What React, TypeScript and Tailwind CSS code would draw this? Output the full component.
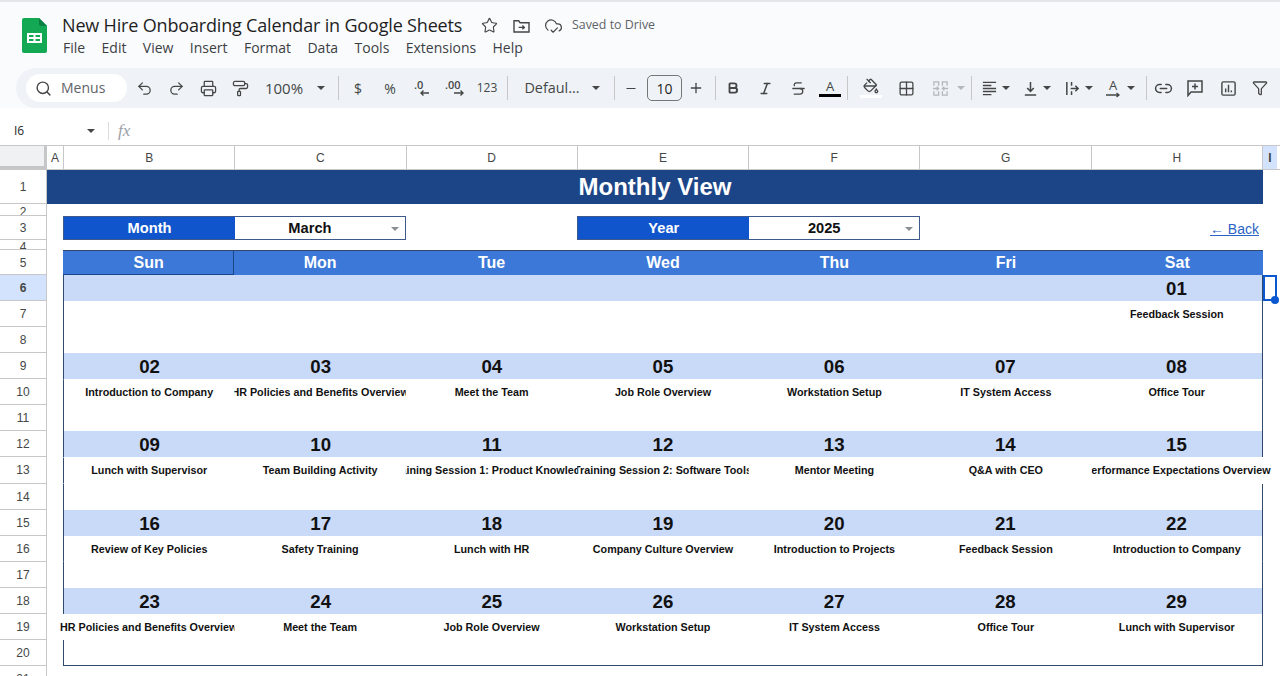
import type { ReactNode } from 'react';
import {
  Bold,
  CloudCheck,
  Funnel,
  Grid2x2,
  Italic,
  Link2,
  Minus,
  PaintBucket,
  PaintRoller,
  Plus,
  Printer,
  Redo2,
  Search,
  Star,
  Strikethrough,
  Undo2,
} from 'lucide-react';

const UI_FONT = 'font-["Open_Sans",sans-serif]';
const CELL_FONT = 'font-["Liberation_Sans",Arial,sans-serif]';
const ICON = 'w-[17px] h-[17px] text-[#444746]';

const weeks: { days: string[]; events: string[] }[] = [
  { days: ['', '', '', '', '', '', '01'], events: ['', '', '', '', '', '', 'Feedback Session'] },
  {
    days: ['02', '03', '04', '05', '06', '07', '08'],
    events: [
      'Introduction to Company',
      'HR Policies and Benefits Overview',
      'Meet the Team',
      'Job Role Overview',
      'Workstation Setup',
      'IT System Access',
      'Office Tour',
    ],
  },
  {
    days: ['09', '10', '11', '12', '13', '14', '15'],
    events: [
      'Lunch with Supervisor',
      'Team Building Activity',
      'Training Session 1: Product Knowledge',
      'Training Session 2: Software Tools',
      'Mentor Meeting',
      'Q&A with CEO',
      'Performance Expectations Overview',
    ],
  },
  {
    days: ['16', '17', '18', '19', '20', '21', '22'],
    events: [
      'Review of Key Policies',
      'Safety Training',
      'Lunch with HR',
      'Company Culture Overview',
      'Introduction to Projects',
      'Feedback Session',
      'Introduction to Company',
    ],
  },
  {
    days: ['23', '24', '25', '26', '27', '28', '29'],
    events: [
      'HR Policies and Benefits Overview',
      'Meet the Team',
      'Job Role Overview',
      'Workstation Setup',
      'IT System Access',
      'Office Tour',
      'Lunch with Supervisor',
    ],
  },
];

const dayNames = ['Sun', 'Mon', 'Tue', 'Wed', 'Thu', 'Fri', 'Sat'];
const colLetters = ['B', 'C', 'D', 'E', 'F', 'G', 'H'];

function Caret({ color = 'border-t-[#444746]' }: { color?: string }) {
  return (
    <span className={`block w-0 h-0 border-x-[4px] border-x-transparent border-t-[4px] ${color}`} />
  );
}

function Slot({ className, children }: { className: string; children?: ReactNode }) {
  return <div className={`flex items-center justify-center shrink-0 h-full ${className}`}>{children}</div>;
}

function Divider({ className }: { className: string }) {
  return (
    <Slot className={className}>
      <span className="block w-px h-[24px] bg-[#c7c7c7]" />
    </Slot>
  );
}

function SheetsLogo() {
  return (
    <svg viewBox="0 0 25 35" className="w-[25px] h-[35px] shrink-0">
      <path d="M2 0h15l8 8v25a2 2 0 0 1-2 2H2a2 2 0 0 1-2-2V2a2 2 0 0 1 2-2z" fill="#12a854" />
      <path d="M17 0l8 8h-6a2 2 0 0 1-2-2z" fill="#0b8043" />
      <path d="M5 15h15v10H5z M7 17v2h4.5v-2z M13.5 17v2H18v-2z M7 21v2h4.5v-2z M13.5 21v2H18v-2z" fill="#fff" fillRule="evenodd" />
    </svg>
  );
}

function Header() {
  const menus = ['File', 'Edit', 'View', 'Insert', 'Format', 'Data', 'Tools', 'Extensions', 'Help'];
  return (
    <div className="flex h-[66px] pl-[22px] pt-[16px] bg-[#f9fbfd]">
      <SheetsLogo />
      <div className={`ml-[15px] ${UI_FONT}`}>
        <div className="flex items-center h-[20px] mt-[-3px]">
          <span className="text-[18px] leading-[20px] text-[#1f1f1f] w-[400px] whitespace-nowrap tracking-[-0.17px]">
            New Hire Onboarding Calendar in Google Sheets
          </span>
          <Star className="ml-[19px] w-[17px] h-[17px] text-[#444746]" strokeWidth={1.6} />
          <svg viewBox="0 0 18 16" className="ml-[15px] w-[17px] h-[15px] text-[#444746]" fill="none" stroke="currentColor" strokeWidth="1.5">
            <path d="M1 3h5l1.5 2H17v10H1z" />
            <path d="M6 10h6M10 8l2 2-2 2" />
          </svg>
          <CloudCheck className="ml-[14px] w-[19px] h-[19px] text-[#444746]" strokeWidth={1.5} />
          <span className="ml-[9px] text-[12.4px] text-[#5f6368]">Saved to Drive</span>
        </div>
        <div className="flex gap-[16.4px] mt-[4px] ml-[1px] text-[14px] leading-[18px] text-[#3c4043]">
          {menus.map((m) => (
            <span key={m}>{m}</span>
          ))}
        </div>
      </div>
    </div>
  );
}

function Toolbar() {
  return (
    <div className={`ml-[16px] h-[40px] pl-[10px] flex items-center rounded-l-[20px] bg-[#eff3f8] text-[#444746] ${UI_FONT}`}>
      <div className="flex items-center w-[101px] h-[28px] pl-[9px] rounded-full bg-white shrink-0">
        <Search className="w-[17px] h-[17px] text-[#444746]" strokeWidth={2} />
        <span className="ml-[9px] mt-[-2px] text-[14px] text-[#5f6368]">Menus</span>
      </div>
      <Slot className="w-[32px] ml-[1px]"><Undo2 className={ICON} strokeWidth={1.8} /></Slot>
      <Slot className="w-[32px]"><Redo2 className={ICON} strokeWidth={1.8} /></Slot>
      <Slot className="w-[32px]"><Printer className={ICON} strokeWidth={1.8} /></Slot>
      <Slot className="w-[32px]"><PaintRoller className={ICON} strokeWidth={1.8} /></Slot>
      <Slot className="w-[56px] text-[15px]">100%</Slot>
      <Slot className="w-[18px]"><Caret /></Slot>
      <Divider className="w-[16px]" />
      <Slot className="w-[24px] text-[14px]">$</Slot>
      <Slot className="w-[40px] text-[14px]">%</Slot>
      <Slot className="w-[24px]">
        <svg viewBox="0 0 20 20" className="w-[20px] h-[20px]" fill="none" stroke="currentColor" strokeWidth="1.4">
          <text x="2" y="11" fontSize="11" fill="currentColor" stroke="none" fontWeight="600">.0</text>
          <path d="M17 15H9M11.5 12.5L9 15l2.5 2.5" />
        </svg>
      </Slot>
      <Slot className="w-[42px]">
        <svg viewBox="0 0 22 20" className="w-[22px] h-[20px]" fill="none" stroke="currentColor" strokeWidth="1.4">
          <text x="1" y="11" fontSize="11" fill="currentColor" stroke="none" fontWeight="600">.00</text>
          <path d="M10 15h9M16.5 12.5L19 15l-2.5 2.5" />
        </svg>
      </Slot>
      <Slot className="w-[22px] text-[12px]">123</Slot>
      <Divider className="w-[18px]" />
      <Slot className="w-[72px] text-[14.4px]">Defaul...</Slot>
      <Slot className="w-[16px]"><Caret /></Slot>
      <Divider className="w-[20px]" />
      <Slot className="w-[14px]"><Minus className="w-[15px] h-[15px]" strokeWidth={2} /></Slot>
      <Slot className="w-[35px] ml-[9px]">
        <div className="flex items-center justify-center w-full h-[26px] rounded-[5px] border border-[#747775] text-[14px] text-[#1f1f1f]">10</div>
      </Slot>
      <Slot className="w-[28px]"><Plus className="w-[16px] h-[16px]" strokeWidth={2} /></Slot>
      <Divider className="w-[10px]" />
      <Slot className="w-[26px]"><Bold className="w-[14px] h-[14px]" strokeWidth={3.2} /></Slot>
      <Slot className="w-[38px]"><Italic className="w-[15px] h-[15px]" strokeWidth={2.4} /></Slot>
      <Slot className="w-[29px]"><Strikethrough className={ICON} strokeWidth={1.8} /></Slot>
      <Slot className="w-[34px]">
        <div className="flex flex-col items-center">
          <span className="text-[13px] leading-[14px] text-[#444746]">A</span>
          <span className="block w-[22px] h-[3px] mt-[1px] bg-black" />
        </div>
      </Slot>
      <Divider className="w-px" />
      <Slot className="w-[36px] ml-[5px]">
        <div className="flex flex-col items-center">
          <PaintBucket className="w-[16px] h-[16px]" strokeWidth={2} />
          <span className="block w-[22px] h-[3px] mt-[1px] bg-white" />
        </div>
      </Slot>
      <Slot className="w-[34px]"><Grid2x2 className={ICON} strokeWidth={1.8} /></Slot>
      <Slot className="w-[34px]">
        <svg viewBox="0 0 18 18" className="w-[17px] h-[17px] text-[#b4b8bc]" fill="none" stroke="currentColor" strokeWidth="1.4">
          <path d="M2 6V2h5v4M11 6V2h5v4M2 12v4h5v-4M11 12v4h5v-4M1 9h5M12 9h5M5 7l2 2-2 2M13 7l-2 2 2 2" />
        </svg>
      </Slot>
      <Slot className="w-[8px]"><Caret color="border-t-[#b4b8bc]" /></Slot>
      <Divider className="w-[12px]" />
      <Slot className="w-[24px]">
        <svg viewBox="0 0 18 18" className="w-[17px] h-[17px]" fill="none" stroke="currentColor" strokeWidth="1.4">
          <path d="M2 2.5h14M2 5.8h9M2 9h14M2 12.2h14M2 15.5h9" />
        </svg>
      </Slot>
      <Slot className="w-[10px]"><Caret /></Slot>
      <Slot className="w-[24px] ml-[7px]">
        <svg viewBox="0 0 18 18" className="w-[17px] h-[17px]" fill="none" stroke="currentColor" strokeWidth="1.6">
          <path d="M3 16h12M9 2v10M5.5 8.5L9 12l3.5-3.5" />
        </svg>
      </Slot>
      <Slot className="w-[10px]"><Caret /></Slot>
      <Slot className="w-[24px] ml-[8px]">
        <svg viewBox="0 0 18 18" className="w-[17px] h-[17px]" fill="none" stroke="currentColor" strokeWidth="1.6">
          <path d="M3 2v14M8 2v4M8 12v4M7 9h8M12 6l3 3-3 3" />
        </svg>
      </Slot>
      <Slot className="w-[10px]"><Caret /></Slot>
      <Slot className="w-[24px] ml-[7px]">
        <div className="flex flex-col items-center">
          <span className="text-[13px] leading-[14px]">A</span>
          <svg viewBox="0 0 16 6" className="w-[16px] h-[6px]" fill="none" stroke="currentColor" strokeWidth="1.3">
            <path d="M1 3h13M11.5 1L14 3l-2.5 2" />
          </svg>
        </div>
      </Slot>
      <Slot className="w-[12px]"><Caret /></Slot>
      <Divider className="w-[18px]" />
      <Slot className="w-[16px]"><Link2 className="w-[19px] h-[19px] shrink-0" strokeWidth={1.9} /></Slot>
      <Slot className="w-[48px]">
        <svg viewBox="0 0 18 18" className="w-[18px] h-[18px]" fill="none" stroke="currentColor" strokeWidth="1.5">
          <path d="M2 2h14v11H5l-3 3.5zM9 4.5v6M6 7.5h6" />
        </svg>
      </Slot>
      <Slot className="w-[18px]">
        <svg viewBox="0 0 18 18" className="w-[17px] h-[17px]" fill="none" stroke="currentColor" strokeWidth="1.5">
          <rect x="2" y="2" width="14" height="14" rx="1.5" />
          <path d="M6 13V9M9 13V5M12 13v-2" />
        </svg>
      </Slot>
      <Slot className="w-[46px]"><Funnel className="w-[16px] h-[16px]" strokeWidth={1.9} /></Slot>
    </div>
  );
}

function FormulaBar() {
  return (
    <div className={`flex items-center h-[30px] mt-[8px] bg-white border-b border-[#c7c7c7] text-[#444746] ${UI_FONT}`}>
      <span className="w-[87px] pl-[14px] text-[12px] text-[#1f1f1f]">I6</span>
      <Caret />
      <span className="block w-px h-[18px] ml-[13px] bg-[#dadce0]" />
      <span className="ml-[9px] text-[17px] italic font-['Liberation_Serif',serif] text-[#9aa0a6]">fx</span>
    </div>
  );
}

function ColumnHeaders() {
  return (
    <div className={`flex h-[24px] border-b border-[#c7c7c7] text-[12px] text-[#444746] ${CELL_FONT}`}>
      <div className="w-[47px] h-full bg-[#f0f1f2] border-r-[3px] border-b-[3px] border-[#c4c7c5] shrink-0" />
      <div className="flex items-center justify-center w-[17px] h-full border-r border-[#c7c7c7] shrink-0">A</div>
      {colLetters.map((c) => (
        <div key={c} className="flex items-center justify-center flex-1 h-full border-r border-[#c7c7c7]">
          {c}
        </div>
      ))}
      <div className="flex items-center justify-center w-[14px] h-full bg-[#d3e3fd] font-bold shrink-0">I</div>
      <div className="w-[3px] shrink-0" />
    </div>
  );
}

// one sheet row: number gutter, then the cells from column A on
function Row({ n, h, active, small, children }: { n: string; h: string; active?: boolean; small?: boolean; children?: ReactNode }) {
  return (
    <div className={`flex ${h}`}>
      <div
        className={`flex items-center justify-center w-[47px] shrink-0 border-r border-b border-[#c7c7c7] text-[12px] overflow-hidden text-[#444746] ${CELL_FONT} ${
          small ? 'pt-[4px]' : 'pt-[1px]'
        } ${active ? 'bg-[#d3e3fd] font-bold' : 'bg-white'}`}
      >
        {n}
      </div>
      {children}
    </div>
  );
}

function Spacer() {
  return <div className="w-[16px] shrink-0" />;
}

function WeekNumbers({ n, days, active }: { n: string; days: string[]; active?: boolean }) {
  return (
    <Row n={n} h="h-[26.07px]" active={active}>
      <Spacer />
      <div className="grid grid-cols-7 w-[1200px] border-x border-[#2f4a6d] bg-[#c9daf8]">
        {days.map((d, i) => (
          <div key={i} className="flex items-center justify-center text-[18.67px] font-bold text-[#111]">
            {d}
          </div>
        ))}
      </div>
      {active && (
        <div className="relative w-[14px] h-full border-2 border-[#0b57d0] shrink-0">
          <span className="absolute right-[-4px] bottom-[-5px] w-[8px] h-[8px] rounded-full bg-[#0b57d0]" />
        </div>
      )}
    </Row>
  );
}

function WeekEvents({ n, events }: { n: string; events: string[] }) {
  return (
    <Row n={n} h="h-[26.07px]">
      <Spacer />
      <div className="relative grid grid-cols-7 w-[1200px]">
        {events.map((e, i) => {
          const long = e === 'Performance Expectations Overview';
          const first = i === 0 && e.startsWith('HR');
          return (
            <div
              key={i}
              className={`flex items-center justify-center text-[10.75px] font-bold text-[#111] ${
                i === 0 && !first ? 'border-l border-[#2f4a6d]' : ''
              } ${i === 6 && !long ? 'border-r border-[#2f4a6d]' : ''} ${
                long
                  ? '[clip-path:inset(0_-10px_0_0)]'
                  : first
                    ? '[clip-path:inset(0_0_0_-5px)]'
                    : '[clip-path:inset(0)]'
              }`}
            >
              <span className="shrink-0 whitespace-nowrap">{e}</span>
            </div>
          );
        })}
      </div>
    </Row>
  );
}

function WeekBlank({ n, last }: { n: string; last?: boolean }) {
  return (
    <Row n={n} h="h-[26.07px]">
      <Spacer />
      <div className={`w-[1200px] border-x border-[#2f4a6d] ${last ? 'border-b' : ''}`} />
    </Row>
  );
}

function Picker({ label, value }: { label: string; value: string }) {
  return (
    <div className="flex col-span-2 border border-[#3d5a8a]">
      <div className="flex items-center justify-center w-[171px] shrink-0 bg-[#1155cc] text-white text-[14.67px] font-bold">
        {label}
      </div>
      <div className="relative flex items-center justify-center flex-1 pr-[20px] bg-white text-[14.67px] font-bold text-[#111]">
        {value}
        <span className="absolute right-[6px] top-[10px]">
          <Caret color="border-t-[#8a8f94]" />
        </span>
      </div>
    </div>
  );
}

function Sheet() {
  return (
    <div className={CELL_FONT}>
      <Row n="1" h="h-[34px]">
        <div className="flex items-center justify-center w-[1216px] bg-[#1c4587] text-white text-[24px] font-bold">
          Monthly View
        </div>
      </Row>
      <Row n="2" h="h-[12px]" small />
      <Row n="3" h="h-[24px]">
        <Spacer />
        <div className="grid grid-cols-7 w-[1200px]">
          <Picker label="Month" value="March" />
          <div />
          <Picker label="Year" value="2025" />
          <div />
          <div className="flex items-center justify-end pr-[4px] pt-[3px] text-[14px] text-[#2a62c4] underline">← Back</div>
        </div>
      </Row>
      <Row n="4" h="h-[10px]" small />
      <Row n="5" h="h-[25px]">
        <Spacer />
        <div className="grid grid-cols-7 w-[1200px] bg-[#3c78d8] border-t border-[#2f4a6d]">
          {dayNames.map((d, i) => (
            <div
              key={d}
              className={`flex items-center justify-center text-[16px] font-bold text-white ${
                i === 0 ? 'shadow-[inset_-1px_-1px_0_#1c4587]' : ''
              }`}
            >
              {d}
            </div>
          ))}
        </div>
      </Row>
      {weeks.map((w, i) => {
        const base = 6 + i * 3;
        return (
          <div key={base}>
            <WeekNumbers n={String(base)} days={w.days} active={i === 0} />
            <WeekEvents n={String(base + 1)} events={w.events} />
            <WeekBlank n={String(base + 2)} last={i === weeks.length - 1} />
          </div>
        );
      })}
      <Row n="21" h="h-[26px]" />
    </div>
  );
}

export default function App() {
  return (
    <div className="w-[1280px] h-[676px] overflow-hidden bg-white border-t-2 border-[#e3e5e8]">
      <div className="bg-[#f9fbfd]">
        <Header />
        <Toolbar />
      </div>
      <div className="bg-[#f9fbfd]">
        <FormulaBar />
      </div>
      <ColumnHeaders />
      <Sheet />
    </div>
  );
}
